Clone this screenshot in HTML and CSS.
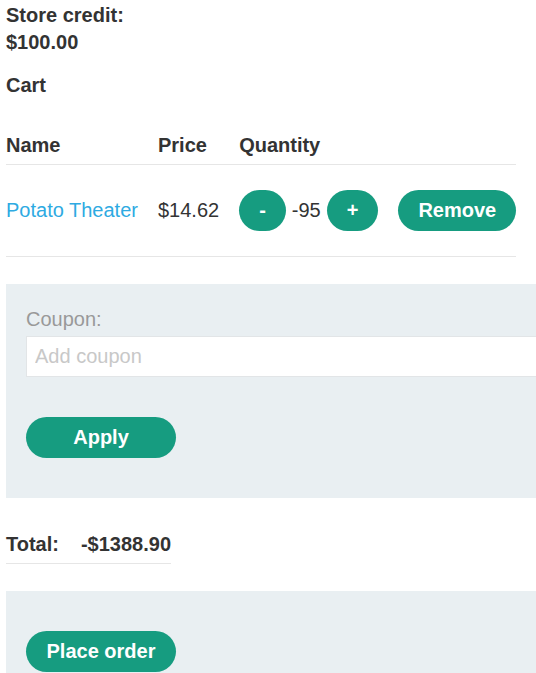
FILE: index.html
```html
<!DOCTYPE html>
<html lang="en">
<head>
<meta charset="utf-8">
<title>Cart</title>
<link rel="stylesheet" href="styles.css">
</head>
<body>
<div class="page">
  <div class="credit">Store credit:<br>$100.00</div>
  <div class="cart-title">Cart</div>
  <table class="cart">
    <thead>
      <tr><th>Name</th><th>Price</th><th>Quantity</th><th></th></tr>
    </thead>
    <tbody>
      <tr>
        <td><a class="item-link" href="#">Potato Theater</a></td>
        <td>$14.62</td>
        <td><div class="qty"><button class="btn btn-small">-</button><span class="qty-value">-95</span><button class="btn btn-small">+</button></div></td>
        <td><button class="btn">Remove</button></td>
      </tr>
    </tbody>
  </table>
  <form class="panel coupon">
    <label class="coupon-label" for="coupon">Coupon:</label>
    <input class="coupon-input" id="coupon" type="text" placeholder="Add coupon">
    <button class="btn btn-wide" type="button">Apply</button>
  </form>
  <table class="total">
    <tr><td>Total:</td><td>-$1388.90</td></tr>
  </table>
  <div class="panel order">
    <button class="btn btn-wide" type="button">Place order</button>
  </div>
</div>
</body>
</html>
```
FILE: styles.css
```css
html, body {
  margin: 0;
  padding: 0;
  overflow: hidden;
  background: #fff;
}
body {
  font-family: "Liberation Sans", Arial, sans-serif;
  font-size: 20px;
  line-height: 27px;
  color: #333;
}
.page {
  padding: 2px 0 0 6px;
}
.credit {
  font-weight: bold;
}
.cart-title {
  font-weight: bold;
  margin-top: 16px;
}
.cart {
  border-collapse: collapse;
  margin-top: 33px;
}
.cart th {
  text-align: left;
  font-weight: bold;
  padding: 0 20px 5px 0;
  border-bottom: 1px solid #e6e6e6;
}
.cart td {
  padding: 25px 20px 25px 0;
  vertical-align: middle;
  border-bottom: 1px solid #e6e6e6;
  white-space: nowrap;
}
.cart th:last-child,
.cart td:last-child {
  padding-right: 0;
}
.item-link {
  color: #2eaae2;
  text-decoration: none;
}
.qty {
  display: flex;
  align-items: center;
  gap: 6px;
}
.btn {
  display: inline-flex;
  align-items: center;
  justify-content: center;
  height: 41px;
  padding: 0 20px;
  border: none;
  border-radius: 21px;
  background: #169c80;
  color: #fff;
  font-family: "Liberation Sans", Arial, sans-serif;
  font-size: 20px;
  font-weight: bold;
  cursor: pointer;
}
.btn-wide {
  width: 150px;
  padding: 0;
}
.panel {
  background: #e9eff2;
  margin: 0 -40px 0 0;
  padding-left: 20px;
  padding-right: 20px;
}
.coupon {
  margin-top: 27px;
  padding-top: 22px;
  padding-bottom: 40px;
  display: flex;
  flex-direction: column;
  align-items: flex-start;
}
.coupon-label {
  color: #999;
}
.coupon-input {
  box-sizing: border-box;
  width: 100%;
  height: 41px;
  margin-top: 3px;
  margin-bottom: 40px;
  padding: 0 8px;
  border: 1px solid #e2e5e7;
  background: #fff;
  font-family: "Liberation Sans", Arial, sans-serif;
  font-size: 20px;
  color: #333;
}
.coupon-input::placeholder {
  color: #c8c8c8;
}
.total {
  border-collapse: collapse;
  margin-top: 33px;
  font-weight: bold;
}
.total td {
  padding: 0 22px 5px 0;
  border-bottom: 1px solid #e6e6e6;
}
.total td:last-child {
  padding-right: 0;
}
.order {
  margin-top: 27px;
  padding-top: 40px;
  padding-bottom: 40px;
}
```
